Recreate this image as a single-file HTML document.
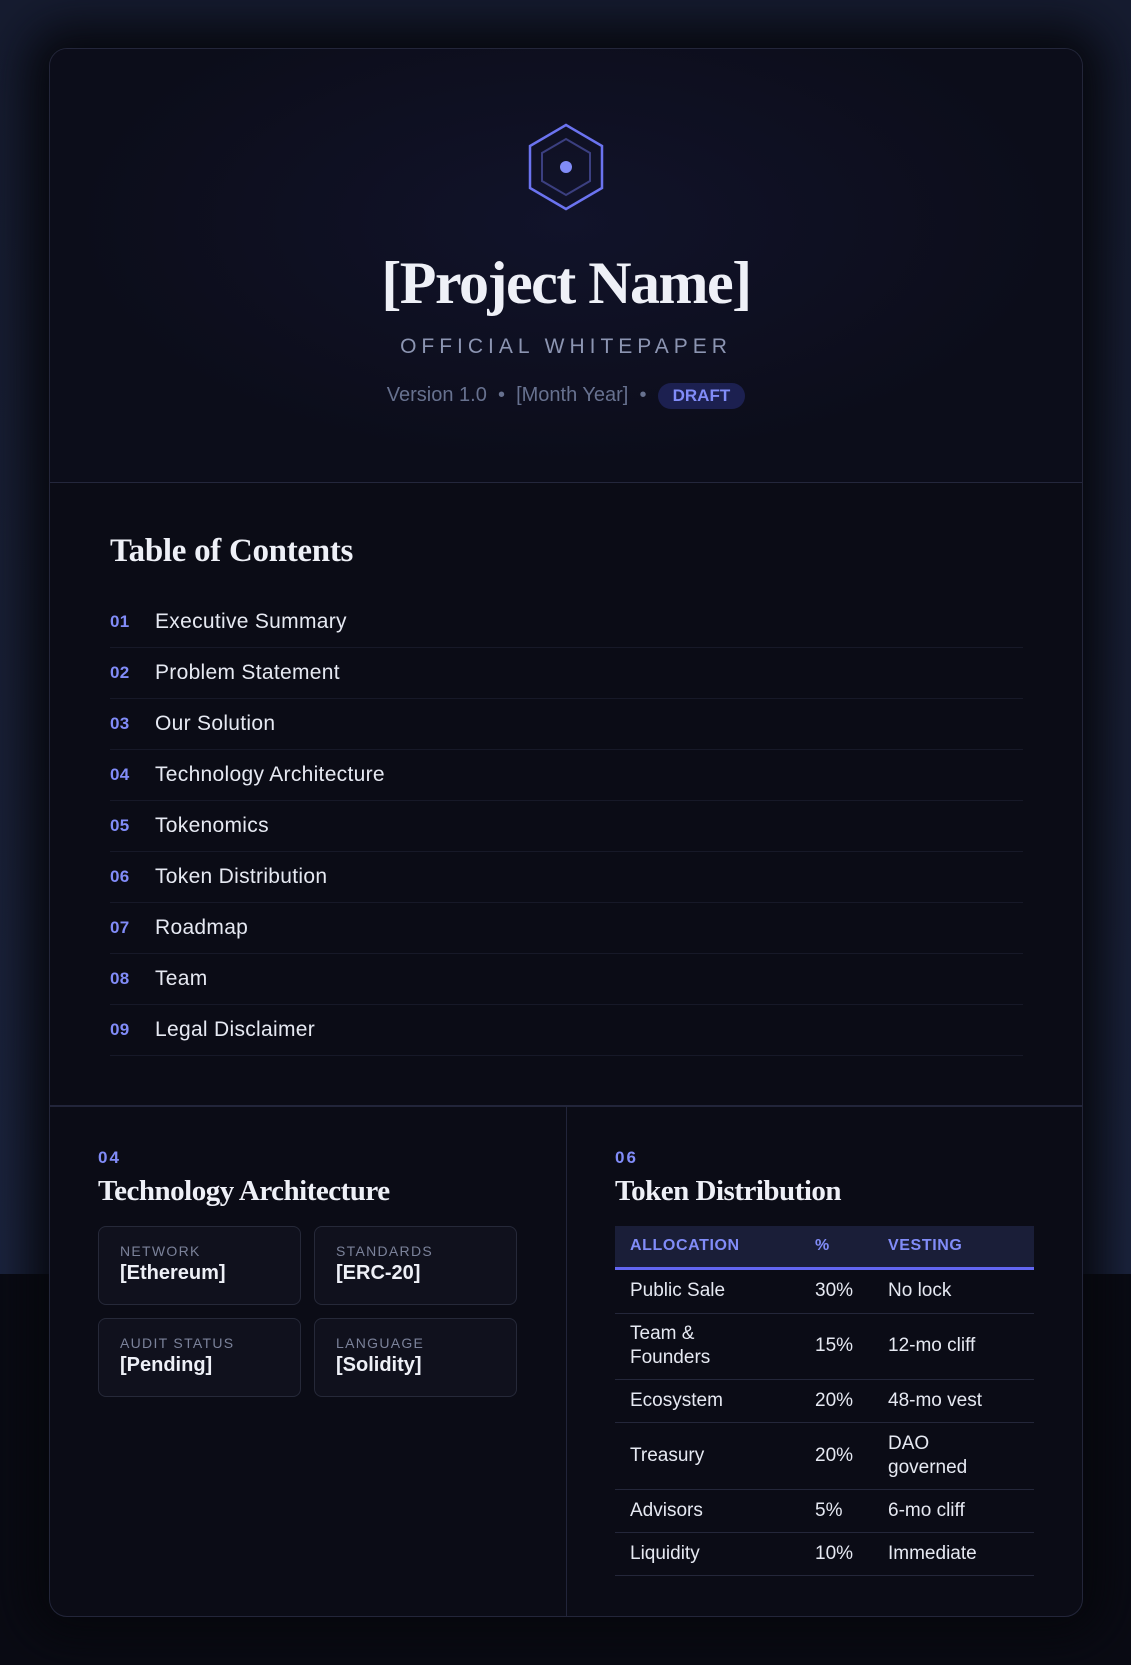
<!DOCTYPE html>
<html><head><meta charset="utf-8"><style>
*{margin:0;padding:0;box-sizing:border-box}
html,body{width:1131px;height:1665px;overflow:hidden;background:#0a0b14;font-family:"Liberation Sans",sans-serif}
.bgtop{position:absolute;left:0;top:0;width:1131px;height:1274px;background:linear-gradient(#161c30,#1a2138 60%,#1c2540);}
.card{position:absolute;left:49px;top:48px;width:1034px;height:1569px;border:1px solid #23263a;border-radius:18px;background:#0b0c16;box-shadow:0 0 45px 22px rgba(6,7,13,.95);overflow:hidden}
.hdr{position:absolute;left:0;top:0;width:100%;height:434px;background:radial-gradient(ellipse 60% 70% at 50% 40%,#11132a 0%,#0c0d1a 80%);border-bottom:1px solid #24273c}
.serif{font-family:"Liberation Serif",serif;font-weight:bold;color:#eef0f7}
.abs{position:absolute}
.toc{position:absolute;left:60px;width:913px}
.row{height:51px;border-bottom:1px solid #171928;display:flex;align-items:center;font-size:21px;letter-spacing:.3px;color:#e6e9f2}
.row b{width:45px;color:#818cf8;font-size:17px}
.box{position:absolute;width:203px;height:79px;border:1px solid #262939;border-radius:8px;background:#10111d;padding:16px 21px}
.box .l{font-size:14px;letter-spacing:1.3px;color:#7b829a}
.box .v{font-size:20px;font-weight:bold;color:#eef0f7;margin-top:3px}
table{position:absolute;left:565px;top:1177px;width:419px;border-collapse:collapse;font-size:19px;color:#e6e9f2}
th{background:#1a1e38;color:#818cf8;text-align:left;font-size:16px;letter-spacing:.6px;height:42px;border-bottom:3px solid #6366f1;padding-left:15px}
td{border-bottom:1px solid #24273a;padding-left:15px;line-height:24px}
</style></head><body>
<div class="bgtop"></div>
<div class="card">
 <div class="hdr">
  <svg class="abs" style="left:476px;top:73px" width="80" height="90" viewBox="0 0 80 90">
   <polygon points="40,3 76,24 76,66 40,87 4,66 4,24" fill="none" stroke="#6b73f0" stroke-width="2.5"/>
   <polygon points="40,17 64,31 64,59 40,73 16,59 16,31" fill="none" stroke="#3b3f80" stroke-width="2"/>
   <circle cx="40" cy="45" r="6" fill="#818cf8"/>
  </svg>
  <div class="abs serif" style="left:0;width:100%;top:200px;text-align:center;font-size:60px;letter-spacing:-1.5px">[Project Name]</div>
  <div class="abs" style="left:0;width:100%;top:286px;text-align:center;font-size:21px;letter-spacing:5px;color:#8c95b2">OFFICIAL WHITEPAPER</div>
  <div class="abs" style="left:0;width:100%;top:334px;text-align:center;font-size:20px;color:#67718f">Version 1.0 &nbsp;•&nbsp; [Month Year] &nbsp;•&nbsp; <span style="display:inline-block;background:#1c2050;color:#818cf8;font-weight:bold;font-size:17px;padding:3px 15px;border-radius:13px">DRAFT</span></div>
 </div>
 <div class="abs serif" style="left:60px;top:484px;font-size:33px;letter-spacing:-.3px">Table of Contents</div>
 <div class="toc" style="top:548px">
  <div class="row"><b>01</b>Executive Summary</div>
  <div class="row"><b>02</b>Problem Statement</div>
  <div class="row"><b>03</b>Our Solution</div>
  <div class="row"><b>04</b>Technology Architecture</div>
  <div class="row"><b>05</b>Tokenomics</div>
  <div class="row"><b>06</b>Token Distribution</div>
  <div class="row"><b>07</b>Roadmap</div>
  <div class="row"><b>08</b>Team</div>
  <div class="row"><b>09</b>Legal Disclaimer</div>
 </div>
 <div class="abs" style="left:0;top:1056px;width:100%;border-top:2px solid #22253a"></div>
 <div class="abs" style="left:516px;top:1057px;height:520px;border-left:1px solid #22253a"></div>
 <div class="abs" style="left:48px;top:1099px;color:#818cf8;font-weight:bold;font-size:17px;letter-spacing:2px">04</div>
 <div class="abs serif" style="left:48px;top:1126px;font-size:29px;letter-spacing:-.5px">Technology Architecture</div>
 <div class="box" style="left:48px;top:1177px"><div class="l">NETWORK</div><div class="v">[Ethereum]</div></div>
 <div class="box" style="left:264px;top:1177px"><div class="l">STANDARDS</div><div class="v">[ERC-20]</div></div>
 <div class="box" style="left:48px;top:1269px"><div class="l">AUDIT STATUS</div><div class="v">[Pending]</div></div>
 <div class="box" style="left:264px;top:1269px"><div class="l">LANGUAGE</div><div class="v">[Solidity]</div></div>
 <div class="abs" style="left:565px;top:1099px;color:#818cf8;font-weight:bold;font-size:17px;letter-spacing:2px">06</div>
 <div class="abs serif" style="left:565px;top:1126px;font-size:29px;letter-spacing:-.5px">Token Distribution</div>
 <table>
  <tr><th style="width:185px">ALLOCATION</th><th style="width:73px">%</th><th>VESTING</th></tr>
  <tr style="height:45px"><td>Public Sale</td><td>30%</td><td>No lock</td></tr>
  <tr style="height:66px"><td>Team &amp;<br>Founders</td><td>15%</td><td>12-mo cliff</td></tr>
  <tr style="height:43px"><td>Ecosystem</td><td>20%</td><td>48-mo vest</td></tr>
  <tr style="height:67px"><td>Treasury</td><td>20%</td><td>DAO<br>governed</td></tr>
  <tr style="height:43px"><td>Advisors</td><td>5%</td><td>6-mo cliff</td></tr>
  <tr style="height:43px"><td>Liquidity</td><td>10%</td><td>Immediate</td></tr>
 </table>
</div>
</body></html>
